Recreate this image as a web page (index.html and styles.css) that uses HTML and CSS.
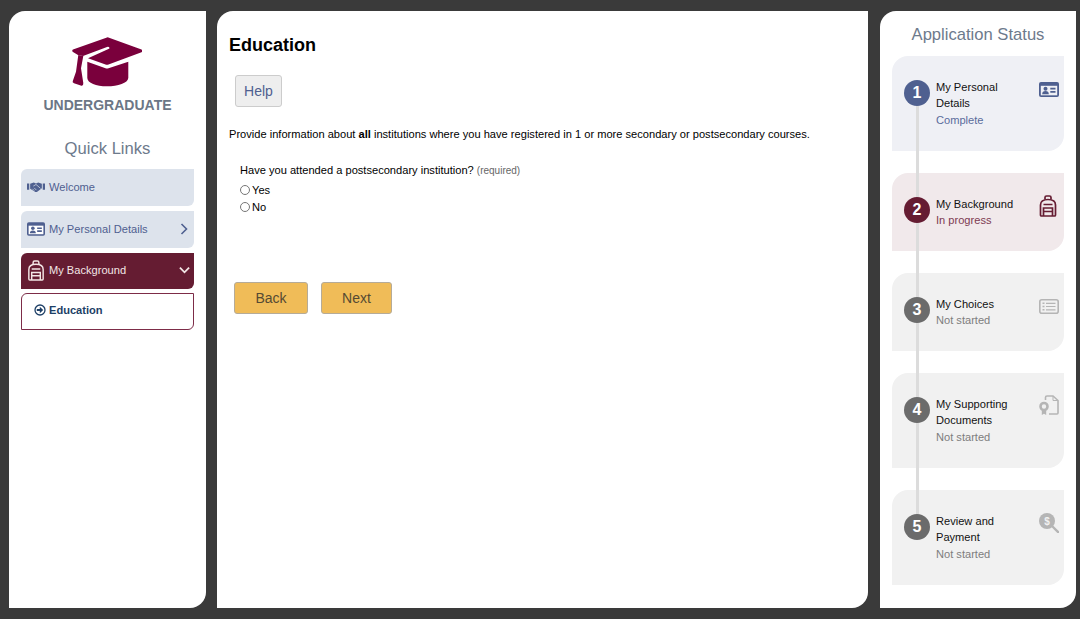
FILE: index.html
```html
<!DOCTYPE html>
<html lang="en">
<head>
<meta charset="utf-8">
<title>Education</title>
<link rel="stylesheet" href="styles.css">
</head>
<body>
<div class="app">
  <aside class="panel nav-panel">
    <div class="brand">
      <svg class="cap" viewBox="0 0 70 50"><path d="M35.700 .3 L69.500 12.500 Q71 14 69.500 15.200 L36.500 27.500 Q35 28 33.500 27.500 L16 21.300 L37 11.800 Q38 10.800 36.800 10 Q36 9.700 35 10 L11 19 L6 18 L1 15 Q-.5 13.700 1 12.500 Z"/><path d="M15.300 24.700 L33.500 31.300 Q35 31.800 36.500 31.300 L56.300 24.700 L56.300 41 C56 46 46 49.300 35 49.300 C24 49.300 15.500 46 15.300 41 Z"/><path d="M6.300 18 L11.300 19 L9 31.300 L11.300 46 Q11.500 49 9.500 48.700 L2 46.300 Q0 45.500 .8 44 L4 34.700 Z"/></svg>
      <div class="brand-name">UNDERGRADUATE</div>
    </div>
    <h2 class="links-title">Quick Links</h2>
    <nav class="menu">
      <a class="menu-item">
        <svg class="mi" viewBox="0 0 20 12"><path d="M0 2h2.500v7H0zM17.500 2H20v7h-2.500zM3.500 2.500 L7.500 1 L10 2 L12.500 1 L16.500 2.500 L16.500 7.500 L11 11.500 Q9.500 12 8.500 11 L3.500 8z"/><path d="M7 5 L10 3.200 L15 7.500M6 8 L8 10M8 7 L10.500 9.500" fill="none" stroke="#dde3ec" stroke-width=".8"/></svg>
        <span>Welcome</span>
      </a>
      <a class="menu-item">
        <svg class="mi" viewBox="0 0 20 15"><rect x="0" y="0" width="20" height="15" rx="2"/><rect x="1.800" y="3.800" width="16.400" height="9.500" fill="#fff"/><circle cx="6.500" cy="6.700" r="2"/><path d="M3.200 12.300 q0-3.200 3.300-3.200 t3.300 3.200zM11.300 5.800h5.200v1.700h-5.200zM11.300 9h5.200v1.700h-5.200z"/></svg>
        <span>My Personal Details</span>
        <svg class="chev" viewBox="0 0 8 12"><path d="M1.500 1 L6.500 6 L1.500 11"/></svg>
      </a>
      <a class="menu-item active">
        <svg class="mi tall" viewBox="0 0 18 22"><g fill="none" stroke="#f3e6e6" stroke-width="1.500"><path d="M1.500 20 V10 Q1.500 4.500 9 4.500 Q16.500 4.500 16.500 10 V20 Q16.500 21 15.500 21 H2.500 Q1.500 21 1.500 20Z"/><path d="M6 4.500 V2.500 Q6 1 7.500 1 H10.500 Q12 1 12 2.500 V4.500"/><path d="M4.500 21 V13 H13.500 V21M4.500 16.500 H13.500M4.500 9.500 H13.500"/></g></svg>
        <span>My Background</span>
        <svg class="chev down" viewBox="0 0 12 8"><path d="M1 1.500 L6 6.500 L11 1.500"/></svg>
      </a>
      <a class="sub-item">
        <svg class="sub-icon" viewBox="0 0 12 12"><circle cx="6" cy="6" r="5" fill="none" stroke="#1d3f66" stroke-width="1.300"/><path d="M2.800 5h3V2.800L9.200 6 5.800 9.200V7h-3z" fill="#1d3f66"/></svg>
        <span>Education</span>
      </a>
    </nav>
  </aside>

  <main class="panel main-panel">
    <h1>Education</h1>
    <button class="help" type="button">Help</button>
    <p class="intro">Provide information about <b>all</b> institutions where you have registered in 1 or more secondary or postsecondary courses.</p>
    <fieldset class="question">
      <legend>Have you attended a postsecondary institution? <small>(required)</small></legend>
      <label class="radio"><input type="radio" name="attended"><span>Yes</span></label>
      <label class="radio"><input type="radio" name="attended"><span>No</span></label>
    </fieldset>
    <div class="actions">
      <button class="primary back" type="button">Back</button>
      <button class="primary next" type="button">Next</button>
    </div>
  </main>

  <aside class="panel status-panel">
    <h2 class="status-title">Application Status</h2>
    <div class="steps">
      <div class="rail"></div>
      <section class="step complete tall-step">
        <div class="num">1</div>
        <div class="step-text"><div class="step-name">My Personal Details</div><div class="step-state">Complete</div></div>
        <svg class="step-icon" viewBox="0 0 20 15"><rect width="20" height="15" rx="2" fill="currentColor"/><rect x="1.800" y="3.800" width="16.400" height="9.500" fill="#eff0f5"/><circle cx="6.500" cy="6.700" r="2" fill="currentColor"/><path d="M3.200 12.300 q0-3.200 3.300-3.200 t3.300 3.200zM11.300 5.800h5.200v1.700h-5.200zM11.300 9h5.200v1.700h-5.200z" fill="currentColor"/></svg>
      </section>
      <section class="step progress">
        <div class="num">2</div>
        <div class="step-text"><div class="step-name">My Background</div><div class="step-state">In progress</div></div>
        <svg class="step-icon pack" viewBox="0 0 18 22"><g fill="none" stroke="currentColor" stroke-width="1.700"><path d="M1.500 20 V10 Q1.500 4.500 9 4.500 Q16.500 4.500 16.500 10 V20 Q16.500 21 15.500 21 H2.500 Q1.500 21 1.500 20Z"/><path d="M6 4.500 V2.500 Q6 1 7.500 1 H10.500 Q12 1 12 2.500 V4.500"/><path d="M4.500 21 V13 H13.500 V21M4.500 16.500 H13.500M4.500 9.500 H13.500"/></g></svg>
      </section>
      <section class="step idle">
        <div class="num">3</div>
        <div class="step-text"><div class="step-name">My Choices</div><div class="step-state">Not started</div></div>
        <svg class="step-icon" viewBox="0 0 20 15"><rect x=".8" y=".8" width="18.400" height="13.400" rx="2" fill="none" stroke="currentColor" stroke-width="1.600"/><path d="M3.500 3.500h2v1.500h-2zM3.500 6.700h2v1.500h-2zM3.500 10h2v1.500h-2zM7 3.700h9.500v1.200H7zM7 6.900h9.500v1.200H7zM7 10.200h9.500v1.200H7z" fill="currentColor"/></svg>
      </section>
      <section class="step idle tall-step">
        <div class="num">4</div>
        <div class="step-text"><div class="step-name">My Supporting Documents</div><div class="step-state">Not started</div></div>
        <svg class="step-icon doc" viewBox="0 0 20 20"><path d="M6.500 5 V2.500 Q6.500 1 8 1 H14 L19 5.500 V18 Q19 19 18 19 H10" fill="none" stroke="currentColor" stroke-width="1.600"/><path d="M14 1 V5.500 H19" fill="none" stroke="currentColor" stroke-width="1"/><circle cx="5" cy="11.500" r="3.500" fill="none" stroke="currentColor" stroke-width="2.600"/><path d="M2.800 15.500 V20 L5 18.700 L7.200 20 V15.500z" fill="currentColor"/></svg>
      </section>
      <section class="step idle tall-step">
        <div class="num">5</div>
        <div class="step-text"><div class="step-name">Review and Payment</div><div class="step-state">Not started</div></div>
        <svg class="step-icon doc search" viewBox="0 0 20 20"><circle cx="8" cy="8" r="8" fill="currentColor"/><path d="M13 13 L19.500 19.500" stroke="currentColor" stroke-width="2.400" stroke-linecap="round"/><text x="8" y="11.500" class="dollar">$</text></svg>
      </section>
    </div>
  </aside>
</div>
</body>
</html>
```
FILE: styles.css
```css
* { box-sizing: border-box; }
html, body { margin: 0; height: 100%; }
body { background: #3a3a3a; font-family: "Liberation Sans", Arial, sans-serif; font-size: 11.100px; color: #000; overflow: hidden; }
.app { display: flex; height: 619px; padding: 11px 4px 11px 9px; }
.panel { background: #fff; border-radius: 16px 0 16px 0; flex: none; }

.nav-panel { width: 197px; padding: 26px 12px 0; margin-right: 11px; }
.brand { display: flex; flex-direction: column; align-items: center; }
.cap { width: 70px; height: 50px; margin-right: 2px; fill: #7a003c; display: block; }
.brand-name { margin-top: 10px; font-size: 14px; line-height: 16px; font-weight: 700; color: #6c7686; }
.links-title { margin: 25px 0 9px; font-size: 16.600px; line-height: 22px; font-weight: 400; color: #6d7a8c; text-align: center; }
.menu { display: flex; flex-direction: column; }
.menu-item { display: flex; align-items: center; height: 37px; margin-bottom: 5px; padding: 0 6px 2px; background: #dde3ec; color: #4f6090; border-radius: 6px 0 6px 0; }
.menu-item span { flex: 1; margin-left: 4px; }
.mi { width: 18px; height: 14px; fill: #4f6090; flex: none; }
.mi.tall { height: 21px; }
.chev { width: 8px; height: 12px; fill: none; stroke: #4f6090; stroke-width: 1.600; flex: none; }
.chev.down { width: 11px; height: 8px; stroke: #f3e6e6; stroke-width: 2; margin-right: -2px; }
.menu-item.active { background: #651c32; color: #f3e6e6; height: 36px; margin-bottom: 4px; }
.sub-item { display: flex; align-items: center; height: 37px; padding: 0 0 3px 12px; border: 1px solid #7d2c48; border-radius: 6px 0 6px 0; color: #1d3f66; font-weight: 700; }
.sub-icon { width: 12px; height: 12px; margin-right: 3px; }

.main-panel { flex: 1; padding: 23px 12px 0; margin-right: 12px; }
h1 { margin: 0; font-size: 18px; line-height: 22px; font-weight: 700; }
.help { display: block; margin: 19px 0 0 6px; width: 47px; height: 32px; font: 14px "Liberation Sans", Arial, sans-serif; color: #4f6090; background: #eee; border: 1px solid #ccc; border-radius: 3px; padding: 0; }
.intro { margin: 20px 0 0; line-height: 14px; }
.question { border: 0; margin: 22px 0 0 11px; padding: 0; }
.question legend { padding: 0; line-height: 14px; margin-bottom: 3px; }
.question small { font-size: 10px; color: #666; }
.radio { display: flex; align-items: center; height: 17px; }
.radio input { margin: 0 2px 0 0; width: 10px; height: 10px; }
.actions { display: flex; gap: 13px; margin: 67px 0 0 5px; }
.primary { height: 32px; font: 14px "Liberation Sans", Arial, sans-serif; color: #554a33; background: #f0bc58; border: 1px solid #b5ab98; border-radius: 3px; padding: 0; }
.back { width: 74px; }
.next { width: 71px; }

.status-panel { width: 196px; padding: 0 12px; }
.status-title { margin: 12px 0 11px; padding-top: 1px; height: 22px; font-size: 16.600px; line-height: 21px; font-weight: 400; color: #6d7a8c; text-align: center; }
.steps { position: relative; display: flex; flex-direction: column; gap: 22px; }
.rail { position: absolute; left: 24px; top: 44px; width: 3px; height: 420px; background: #dcdcdc; z-index: 1; }
.step { display: flex; align-items: flex-start; height: 78px; padding: 24px 5px 0 12px; border-radius: 16px 0 16px 0; }
.tall-step { height: 95px; }
.num { position: relative; z-index: 2; flex: none; width: 26px; height: 26px; border-radius: 50%; color: #fff; font-size: 16px; font-weight: 700; line-height: 26px; text-align: center; }
.step-text { flex: 1; margin: -1.400px 0 0 6px; line-height: 16.700px; }
.step-name { max-width: 84px; color: #111; }
.step-icon { flex: none; width: 20px; height: 15px; margin: 2px 0 0; }
.step-icon.pack { width: 18px; height: 22px; margin: -2px 2px 0 0; }
.step-icon.doc { height: 20px; margin-top: -2px; }
.step-icon.search { margin-top: -1px; }
.complete { background: #eff0f5; }
.complete .num { background: #4f6090; }
.complete .step-state { color: #5a6c9c; }
.complete .step-icon { color: #4f6090; }
.progress { background: #f1e9eb; }
.progress .num { background: #651c32; }
.progress .step-state { color: #7d3a52; }
.progress .step-icon { color: #651c32; }
.idle { background: #f1f1f1; }
.idle .num { background: #6b6b6b; }
.idle .step-state { color: #7d7d7d; }
.idle .step-icon { color: #b5b5b5; }
.dollar { font-size: 10px; font-weight: 700; fill: #f1f1f1; text-anchor: middle; }
```
